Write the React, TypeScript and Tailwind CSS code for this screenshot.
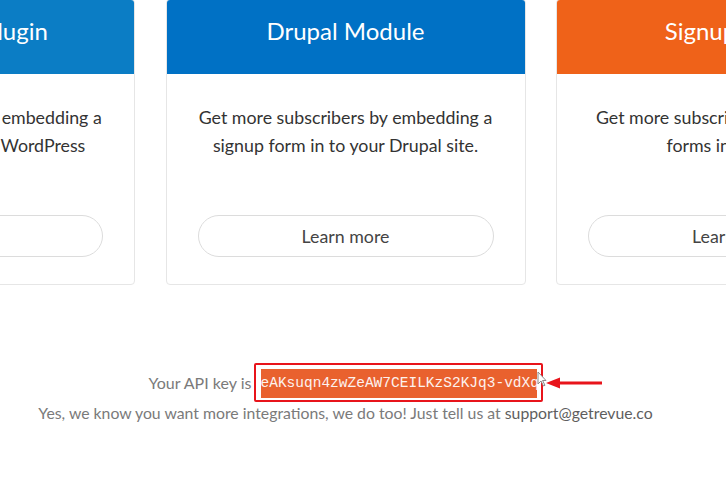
import React from 'react';

const cards = [
  {
    title: 'WordPress Plugin',
    head: 'bg-[#0b7dc5]',
    lines: ['Get more subscribers by embedding a', 'signup form in to your WordPress'],
  },
  {
    title: 'Drupal Module',
    head: 'bg-[#0071c5]',
    lines: ['Get more subscribers by embedding a', 'signup form in to your Drupal site.'],
  },
  {
    title: 'Signup Forms',
    head: 'bg-[#ef6219]',
    lines: ['Get more subscribers by embedding', 'forms in your site.'],
  },
];

const Card: React.FC<{ title: string; head: string; lines: string[] }> = ({ title, head, lines }) => (
  <div className="w-[360px] shrink-0 rounded-[4px] border border-[#e6e6e6] bg-white overflow-hidden">
    <div className={`${head} h-[74px] pt-[13px] text-center text-[24px] leading-[36px] text-white`}>{title}</div>
    <div className="px-[31px] pt-[29px] pb-[27px]">
      <p className="min-h-[84px] mb-[28px] text-center text-[17.8px] leading-[28px] text-[#333]">
        {lines.map((l) => (
          <span key={l} className="block whitespace-nowrap">{l}</span>
        ))}
      </p>
      <button className="w-full h-[42px] rounded-full border border-[#dcdcdc] bg-white text-[17.8px] text-[#444]">
        Learn more
      </button>
    </div>
  </div>
);

export default function App() {
  return (
    <div className="w-[726px] h-[500px] overflow-hidden bg-white font-['Lato','Noto_Sans',sans-serif]">
      <div className="ml-[-225px] w-[1141px] flex flex-col">
        <div className="flex gap-[30.5px] mt-[-1px]">
          {cards.map((c) => (
            <Card key={c.title} {...c} />
          ))}
        </div>

        <div className="mt-[78px] flex justify-center items-center text-[16px] text-[#7a7a7a]">
          <span className="whitespace-pre">Your API key is </span>
          <span className="relative ml-[-2px] border-2 border-[#e8141b] rounded-[2px] pl-[5px] pr-[4px] pt-[4px] pb-[2px]">
            <span className="block w-[276px] h-[29px] overflow-hidden whitespace-nowrap bg-[#e9612e] text-[#fdf2ee] font-['Liberation_Mono',monospace] text-[14.5px] leading-[29px]">
              eAKsuqn4zwZeAW7CEILKzS2KJq3-vdXq
            </span>
            <svg className="absolute left-[281px] top-[6px]" width="10" height="16" viewBox="0 0 10 16">
              <path d="M1 1 L1 13 L4 10 L6.5 15 L8 14.3 L5.6 9.5 L9 9.5 Z" fill="#fff" stroke="#8a8a8a" strokeWidth="1" />
            </svg>
            <svg className="absolute left-[290px] top-[12px]" width="58" height="12" viewBox="0 0 58 12">
              <path d="M0 6 L14 0.5 L14 4.6 L56 4.6 L56 7.4 L14 7.4 L14 11.5 Z" fill="#e8141b" />
            </svg>
          </span>
        </div>

        <p className="mt-[-1px] text-center text-[15.8px] leading-[24px] text-[#7a7a7a]">
          Yes, we know you want more integrations, we do too! Just tell us at{' '}
          <span className="text-[#5e5e5e]">support@getrevue.co</span>
        </p>
      </div>
    </div>
  );
}
